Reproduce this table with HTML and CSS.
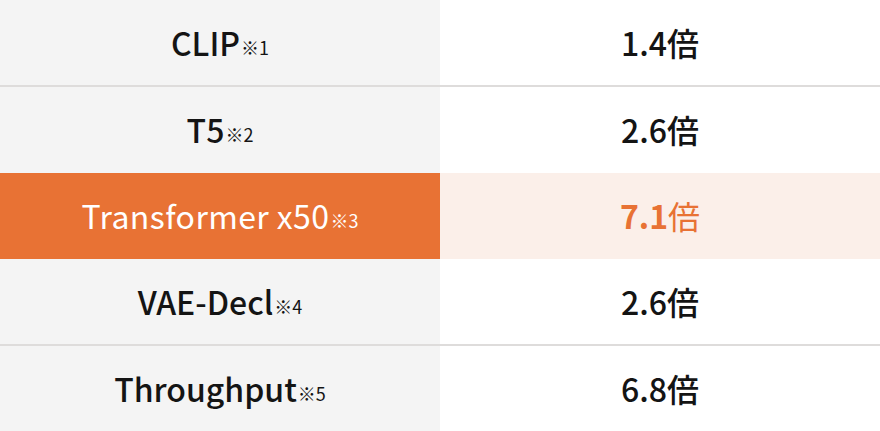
FILE: index.html
```html
<!DOCTYPE html>
<html lang="ja">
<head>
<meta charset="utf-8">
<link rel="stylesheet" href="styles.css">
</head>
<body>
<div class="table">
  <div class="row sep">
    <div class="cell name">CLIP<span class="note">※1</span></div>
    <div class="cell val">1.4倍</div>
  </div>
  <div class="row">
    <div class="cell name">T5<span class="note">※2</span></div>
    <div class="cell val">2.6倍</div>
  </div>
  <div class="row hl">
    <div class="cell name">Transformer x50<span class="note">※3</span></div>
    <div class="cell val"><span class="num">7.1</span>倍</div>
  </div>
  <div class="row sep short">
    <div class="cell name">VAE-Decl<span class="note">※4</span></div>
    <div class="cell val">2.6倍</div>
  </div>
  <div class="row short">
    <div class="cell name">Throughput<span class="note">※5</span></div>
    <div class="cell val">6.8倍</div>
  </div>
</div>
</body>
</html>
```

FILE: styles.css
```css
html, body {
  margin: 0;
  padding: 0;
  background: #ffffff;
}
.table {
  width: 880px;
  display: flex;
  flex-direction: column;
  font-family: "Noto Sans CJK JP", "Noto Sans", sans-serif;
  color: #141414;
}
.row {
  display: grid;
  grid-template-columns: 440px 440px;
  height: 86px;
}
.row.sep {
  height: 85px;
  border-bottom: 2px solid #dedcdb;
}
.row.short {
  height: 85px;
}
.cell {
  display: flex;
  align-items: center;
  justify-content: center;
  font-size: 32px;
  font-weight: 500;
  line-height: 1;
  padding-bottom: 2px;
}
.name {
  background: #f4f4f4;
}
.val {
  background: #ffffff;
}
.note {
  font-size: 18px;
  font-weight: 400;
  margin-top: 10px;
  margin-left: 1px;
  letter-spacing: 0;
}
.hl .name {
  background: #e87234;
  color: #ffffff;
  font-weight: 400;
  letter-spacing: 0.4px;
}
.hl .val {
  background: #fbefe9;
  color: #e87234;
  font-weight: 400;
}
.hl .num {
  font-weight: 700;
}
```
